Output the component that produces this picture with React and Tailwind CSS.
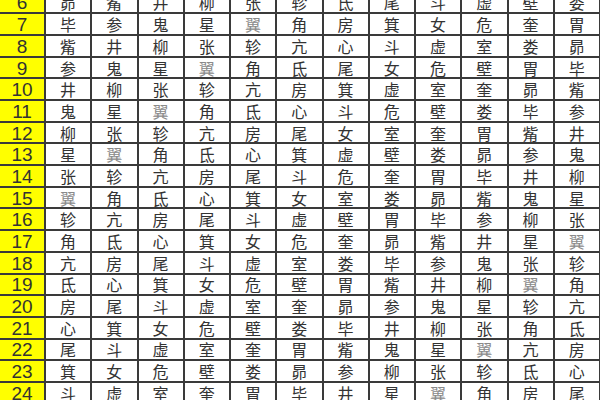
import React from "react";

const XIU = ["角","亢","氐","房","心","尾","箕","斗","女","虚","危","室","壁","奎","娄","胃","昴","毕","觜","参","井","鬼","柳","星","张","翼","轸"];
const START = [11, 13, 15, 17, 19, 21, 24, 0, 2, 4, 7, 9];
const DAYS = [6,7,8,9,10,11,12,13,14,15,16,17,18,19,20,21,22,23,24,25];

export default function App() {
  return (
    <div className="w-[600px] h-[400px] overflow-hidden bg-white">
      <div
        className="grid grid-cols-[44px_repeat(12,minmax(0,1fr))] auto-rows-[19.7px] gap-[2px] bg-[#3a3a3a] -mt-[7.4px] pr-[1px]"
      >
        {DAYS.map((d) => (
          <React.Fragment key={d}>
            <div className="bg-[#ffff00] flex items-center justify-center text-[19px] text-[#333333] leading-none pt-[1px] font-['Liberation_Sans',sans-serif]">
              {d}
            </div>
            {START.map((s, i) => {
              const ch = XIU[(s + d - 1) % 27];
              return (
                <div
                  key={i}
                  className={
                    "bg-white flex items-center justify-center text-[16px] leading-none font-['Noto_Sans_CJK_SC',sans-serif] " +
                    (ch === "翼" ? "text-[#8a8a8a]" : "text-[#333333]")
                  }
                >
                  {ch}
                </div>
              );
            })}
          </React.Fragment>
        ))}
      </div>
    </div>
  );
}
